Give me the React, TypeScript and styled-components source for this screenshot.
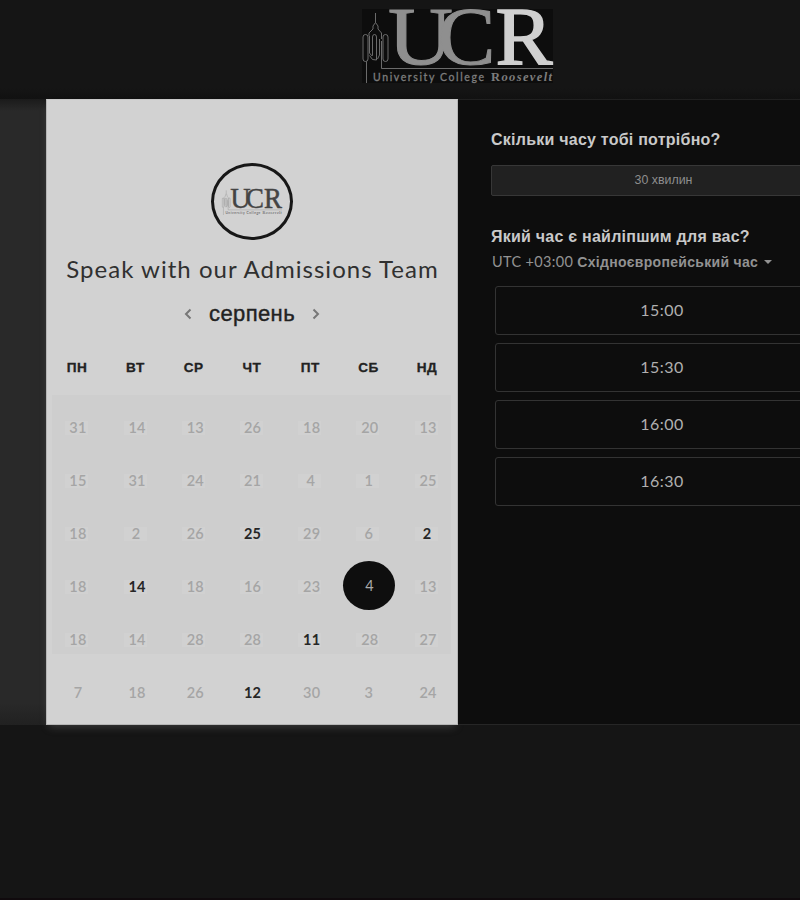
import React from "react";
import styled, { createGlobalStyle } from "styled-components";

const GlobalStyle = createGlobalStyle`
  * { box-sizing: border-box; }
  body { margin: 0; background: #151515; overflow: hidden; }
  button { margin: 0; padding: 0; border: 0; background: none; font: inherit; color: inherit; }
  h1, h2, h3 { margin: 0; }
`;

const sans = `"Liberation Sans", Arial, sans-serif`;
const humanist = `Lato, "Open Sans", sans-serif`;

const Page = styled.div`
  display: flex;
  flex-direction: column;
  width: 800px;
  height: 900px;
  overflow: hidden;
  background: #151515;
  border-bottom: 2px solid #100a0d;
  font-family: ${sans};
`;

const Header = styled.header`
  flex: none;
  height: 99px;
  padding: 9px 0 0 362px;
  background: linear-gradient(#151515 88px, #111 99px);
`;

const Main = styled.main`
  flex: none;
  display: flex;
  height: 626px;
`;

const Gutter = styled.div`
  flex: none;
  width: 46px;
  background: linear-gradient(#1b1b1b, #292929 12px, #292929 604px, #212121);
`;

const Calendar = styled.section`
  flex: none;
  width: 412px;
  display: flex;
  flex-direction: column;
  align-items: center;
  background: #d2d2d2;
  border: 1px solid #b5b5b5;
  border-top-color: #c9c9c9;
  box-shadow: 0 5px 8px -3px rgba(130, 130, 130, 0.35);
`;

const Avatar = styled.div`
  flex: none;
  display: flex;
  align-items: center;
  justify-content: center;
  width: 82px;
  height: 77px;
  margin-top: 63px;
  border: 3px solid #171717;
  border-radius: 50%;
`;

const Title = styled.h1`
  margin-top: 13px;
  height: 32px;
  font: 400 24px/32px ${humanist};
  letter-spacing: 1.02px;
  text-indent: 1px;
  white-space: nowrap;
  color: #303030;
`;

const MonthRow = styled.div`
  display: flex;
  align-items: center;
  justify-content: center;
  gap: 17px;
  height: 28px;
  margin-top: 15px;
`;

const Month = styled.h2`
  font: 400 22px/28px ${sans};
  letter-spacing: 0.4px;
  color: #222;
  -webkit-text-stroke: 0.4px #222;
`;

const Arrow = styled.button`
  display: flex;
  color: #777;
`;

const Week = styled.div`
  display: grid;
  grid-template-columns: repeat(7, 58.3px);
  justify-content: center;
  height: 20px;
  margin-top: 30px;
  text-align: center;
  font: 700 13.6px/20px ${sans};
  letter-spacing: 0.5px;
  color: #222;
  -webkit-text-stroke: 0.3px #222;
`;

const Days = styled.div`
  display: grid;
  grid-template-columns: repeat(7, 58.2px);
  grid-auto-rows: 53px;
  justify-content: center;
  align-self: stretch;
  margin: 17px 6px 0 5px;
  padding-top: 6px;
  background: linear-gradient(#cecece 259px, transparent 259px);
`;

const Cell = styled.div`
  display: flex;
  align-items: center;
  justify-content: center;
`;

const Day = styled.button<{ $open: boolean; $plain: boolean; $shift: number }>`
  width: 23px;
  height: 14px;
  background: ${(p) => (p.$plain ? "transparent" : "#d1d1d1")};
  font: ${(p) => (p.$open ? 700 : 600)} 14.5px/14px ${humanist};
  letter-spacing: 0.2px;
  text-indent: ${(p) => p.$shift}px;
  white-space: nowrap;
  color: ${(p) => (p.$open ? "#262626" : "#a5a5a5")};
`;

const SelectedDay = styled.button`
  flex: none;
  width: 52px;
  height: 49px;
  margin: 0 0 2px 3px;
  border-radius: 50%;
  background: #0e0e0e;
  color: #aaa;
  font: 400 14.5px/47px ${humanist};
`;

const Booking = styled.section`
  flex: none;
  width: 410px;
  padding: 30px 34px 0 33px;
  background: #0d0d0d;
  border-top: 1px solid #202020;
  border-bottom: 1px solid #262626;
`;

const Question = styled.h3`
  height: 20px;
  font: 700 16px/20px ${sans};
  letter-spacing: 0.24px;
  white-space: nowrap;
  color: #c9c9c9;
`;

const Duration = styled.button`
  display: block;
  width: 345px;
  height: 31px;
  margin: 15px 0 31px;
  border: 1px solid #373737;
  border-radius: 2px;
  background: #212121;
  color: #8e8e8e;
  font: 400 12.4px/29px ${sans};
`;

const Zone = styled.button`
  display: flex;
  align-items: center;
  height: 20px;
  margin: 5px 0 14px 1px;
  color: #929292;
  white-space: nowrap;
`;

const Offset = styled.span`
  font: 400 14.5px/20px ${humanist};
  letter-spacing: 0.35px;
`;

const ZoneName = styled.span`
  margin: 0 6px 0 4px;
  font: 700 14px/20px ${sans};
  letter-spacing: 0.3px;
`;

const Slots = styled.div`
  display: grid;
  gap: 8px;
  margin-left: 4px;
`;

const Slot = styled.button`
  width: 334px;
  height: 49px;
  padding-bottom: 2px;
  border: 1px solid #333;
  border-radius: 3px;
  color: #b0b0b0;
  font: 400 16px/45px ${humanist};
  letter-spacing: 0.5px;
`;

const LogoSvg = styled.svg`
  display: block;
  overflow: visible;
`;

type LogoProps = {
  width: number;
  height: number;
  back: string;
  uc: string;
  r: string;
  ink: string;
};

const Logo = ({ width, height, back, uc, r, ink }: LogoProps) => (
  <LogoSvg width={width} height={height} viewBox="0 0 191 74" preserveAspectRatio="none">
    <rect width="191" height="74" fill={back} />
    <g fill="none" stroke={ink} strokeWidth="1" strokeOpacity="0.85">
      <path d="M13.500 4v9.500M13.500 13.500 11 17v3l-4 4v3M13.500 13.500l2.500 3.500v3l3.500 4v6" />
      <rect x="1" y="25.500" width="5" height="27" rx="2.500" />
      <rect x="21" y="25.500" width="5" height="27" rx="2.500" />
      <path d="M4.500 52.500V74M7.500 27v17l2 2.500h1V28q0-2.500 2-2.500t2 2.500v23l-4-.5-3-4" />
      <path d="M17.500 30v16l-2 4M19.500 32v27.500H191" />
    </g>
    <g fontFamily="Liberation Serif, serif" fontSize="82" strokeWidth="1">
      <text x="26" y="54.500" fill={uc} stroke={uc} textLength="65" lengthAdjust="spacingAndGlyphs">U</text>
      <text x="75.500" y="54.500" fill={uc} stroke={uc} textLength="58" lengthAdjust="spacingAndGlyphs">C</text>
      <text x="133.500" y="54.500" fill={r} stroke={r} strokeWidth="1.500" textLength="57" lengthAdjust="spacingAndGlyphs">R</text>
    </g>
    <text x="11" y="71.500" fontFamily="Lato, sans-serif" fontSize="10.500" fill={ink} stroke={ink} strokeWidth="0.3" textLength="111">
      University College
    </text>
    <text x="129" y="71.500" fontFamily="Liberation Serif, serif" fontWeight="700" fontSize="12.500" fill={ink} textLength="61">
      R<tspan fontStyle="italic">oosevelt</tspan>
    </text>
  </LogoSvg>
);

const Chevron = ({ flip }: { flip?: boolean }) => (
  <svg width="8" height="12" viewBox="0 0 8 12" fill="none" stroke="currentColor" strokeWidth="2">
    <path d={flip ? "M1.500 1.500 6 6 1.500 10.500" : "M6.500 1.500 2 6l4.500 4.500"} />
  </svg>
);

const weekdays = ["ПН", "ВТ", "СР", "ЧТ", "ПТ", "СБ", "НД"];

const weeks = [
  [31, 14, 13, 26, 18, 20, 13],
  [15, 31, 24, 21, 4, 1, 25],
  [18, 2, 26, 25, 29, 6, 2],
  [18, 14, 18, 16, 23, 4, 13],
  [18, 14, 28, 28, 11, 28, 27],
  [7, 18, 26, 12, 30, 3, 24],
];

const open = new Set(["2-3", "2-6", "3-1", "4-4", "5-3"]);
const selected = "3-5";
const times = ["15:00", "15:30", "16:00", "16:30"];

const shiftFor = (day: number, column: number) => {
  if (day < 10) return 2;
  return column === 0 || column === 3 ? 2 : 4;
};

export default function App() {
  return (
    <>
      <GlobalStyle />
      <Page>
        <Header>
          <Logo width={191} height={74} back="#0d0d0d" uc="#8f8f8f" r="#d0d0d0" ink="#7d7d7d" />
        </Header>
        <Main>
          <Gutter />
          <Calendar>
            <Avatar>
              <Logo width={60} height={26} back="#d2d2d2" uc="#444" r="#444" ink="#777" />
            </Avatar>
            <Title>Speak with our Admissions Team</Title>
            <MonthRow>
              <Arrow aria-label="Попередній місяць"><Chevron /></Arrow>
              <Month>серпень</Month>
              <Arrow aria-label="Наступний місяць"><Chevron flip /></Arrow>
            </MonthRow>
            <Week>
              {weekdays.map((d) => <span key={d}>{d}</span>)}
            </Week>
            <Days>
              {weeks.flatMap((week, r) =>
                week.map((day, c) => {
                  const id = `${r}-${c}`;
                  return (
                    <Cell key={id}>
                      {id === selected ? (
                        <SelectedDay>{day}</SelectedDay>
                      ) : (
                        <Day $open={open.has(id)} $plain={r === 5} $shift={shiftFor(day, c)}>
                          {day}
                        </Day>
                      )}
                    </Cell>
                  );
                })
              )}
            </Days>
          </Calendar>
          <Booking>
            <Question>Скільки часу тобі потрібно?</Question>
            <Duration>30 хвилин</Duration>
            <Question>Який час є найліпшим для вас?</Question>
            <Zone>
              <Offset>UTC +03:00</Offset>
              <ZoneName>Східноєвропейський час</ZoneName>
              <svg width="8" height="4" viewBox="0 0 8 4"><path d="M0 0h8L4 4z" fill="currentColor" /></svg>
            </Zone>
            <Slots>
              {times.map((t) => <Slot key={t}>{t}</Slot>)}
            </Slots>
          </Booking>
        </Main>
      </Page>
    </>
  );
}
